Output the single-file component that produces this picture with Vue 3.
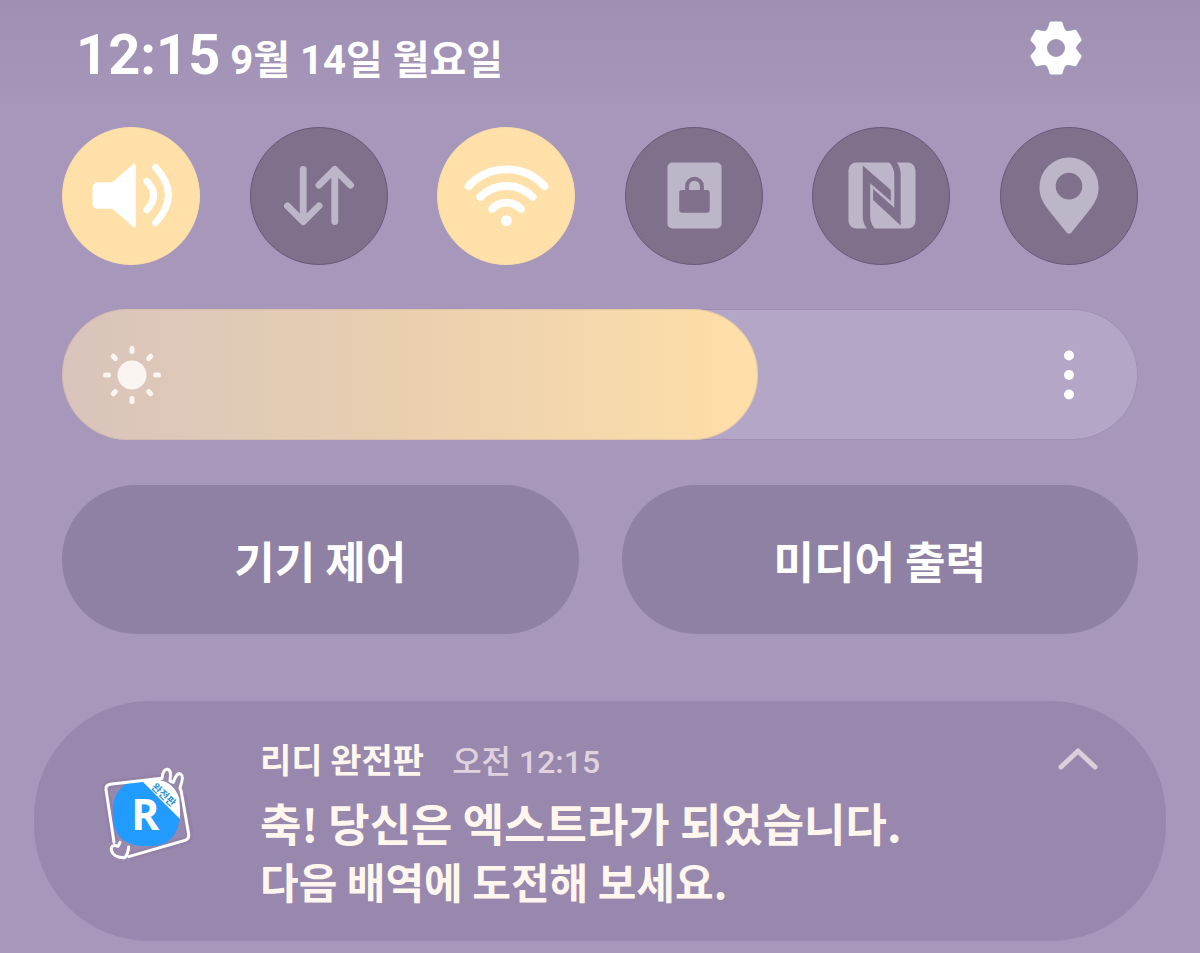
<script setup>
import { ref, computed } from "vue";

const toggles = ref([
  { id: "sound", label: "소리", on: true },
  { id: "data", label: "모바일 데이터", on: false },
  { id: "wifi", label: "Wi-Fi", on: true },
  { id: "lock", label: "화면 잠금", on: false },
  { id: "nfc", label: "NFC", on: false },
  { id: "location", label: "위치", on: false },
]);

const maxBrightness = 255;
const brightness = ref(165);
const fillWidth = computed(() => `${brightness.value / maxBrightness * 100}%`);

const expanded = ref(true);
</script>

<template>
  <main class="shade">
    <header>
      <h1>
        <time class="clock">12:15</time>
        <span class="date">9월 14일 월요일</span>
      </h1>
      <button class="settings" aria-label="설정">
        <svg viewBox="-28 -28 56 56">
          <circle class="ring" r="14.5" />
          <path v-for="n in 6" :key="n" class="tooth"
          d="M-9 -16 Q-7 -18 -5 -25 H5 Q7 -18 9 -16 Z"
          :transform="`rotate(${n * 60})`" />
        </svg>
      </button>
    </header>

    <section class="toggles">
      <button v-for="t in toggles" :key="t.id" class="toggle" :class="{ on: t.on }"
      :aria-label="t.label" :aria-pressed="t.on" @click="t.on = !t.on">
        <svg viewBox="0 0 138 138">
          <g v-if="t.id === 'sound'">
            <path class="solid" d="M36 55 H50 L71 37 Q74 35 74 39 V98 Q74 102 71 100 L50 82 H36 Q30 82 30 76 V61 Q30 55 36 55 Z" />
            <path class="line" d="M85 54 Q99 68 85 83" />
            <path class="line" d="M94 40 Q120 68 94 96" />
          </g>
          <g v-else-if="t.id === 'data'">
            <path class="line" d="M53 42 V95 M37 79 L53 95 L69 79" />
            <path class="line" d="M85 95 V42 M69 58 L85 42 L101 58" />
          </g>
          <g v-else-if="t.id === 'wifi'">
            <path class="line thick" d="M31 59 A52 52 0 0 1 108 59" />
            <path class="line thick" d="M43 70 A37 37 0 0 1 96 70" />
            <path class="line thick" d="M55 82 A20 20 0 0 1 84 82" />
            <circle class="solid" cx="69.5" cy="94" r="5.5" />
          </g>
          <g v-else-if="t.id === 'lock'">
            <rect class="solid" x="42" y="35" width="55" height="67" rx="5" />
            <rect class="cut" x="54" y="63" width="31" height="23" rx="3" />
            <path class="cut-line" d="M62 64 V59 A7.5 7.5 0 0 1 77 59 V64" />
          </g>
          <g v-else-if="t.id === 'nfc'">
            <rect class="solid" x="36" y="35" width="68" height="67" rx="8" />
            <path class="cut" d="M50.5 38 L79 63 V74 L58 56 V89 Q58 97 63 102.5 H55 Q50.5 97 50.5 89 Z" />
            <path class="cut" d="M89 99 L61 73 V62 L82.5 81 V48 Q82.5 40 77 34.5 H85 Q89 40 89 48 Z" />
          </g>
          <g v-else>
            <path class="solid" fill-rule="evenodd" d="M69 30 A30 30 0 0 1 99 60 C99 70 95 76 90 83 L71.5 106 Q69 108.5 66.5 106 L48 83 C43 76 39 70 39 60 A30 30 0 0 1 69 30 Z M69 45.5 A13.5 13.5 0 1 0 69 72.5 A13.5 13.5 0 1 0 69 45.5 Z" />
          </g>
        </svg>
      </button>
    </section>

    <section class="brightness">
      <div class="fill" :style="{ width: fillWidth }"></div>
      <svg class="sun" viewBox="-30 -30 60 60">
        <circle r="14.5" />
        <path v-for="n in 8" :key="n" d="M0 -23.5 V-26.5" :transform="`rotate(${n * 45})`" />
      </svg>
      <input v-model.number="brightness" type="range" min="0" :max="maxBrightness" aria-label="밝기">
      <button class="more" aria-label="더보기">
        <svg viewBox="0 0 10 50">
          <circle cx="5" cy="5.5" r="5" />
          <circle cx="5" cy="25" r="5" />
          <circle cx="5" cy="44.5" r="5" />
        </svg>
      </button>
    </section>

    <section class="shortcuts">
      <button>기기 제어</button>
      <button>미디어 출력</button>
    </section>

    <article class="notification">
      <svg class="app-icon" viewBox="0 0 360 360" role="img" aria-label="리디 완전판">
        <clipPath id="badge">
          <path d="M168 72 C234 72 268 102 270 170 C270 241 236 274 172 274 C102 274 68 244 68 172 C68 106 106 72 168 72 Z" />
        </clipPath>
        <path class="outline-shadow" d="M48 104 Q46 91 60 88 L215 70 M278 118 L298 238 Q300 252 287 256 L116 305 M48 104 L72 262" />
        <g clip-path="url(#badge)">
          <rect class="blue" x="60" y="60" width="220" height="220" />
          <path class="white" d="M148 70 L272 194 V60 H148 Z" />
        </g>
        <path class="white" d="M200 74 Q250 78 268 130 L270 190 L180 100 Z" />
        <path class="outline" d="M72 262 L48 104 Q46 91 60 88 L216 70 C218 54 222 42 232 43 C244 44 242 62 240 78 L250 82 C256 64 264 52 272 57 C282 62 276 82 270 98 Q274 108 276 122 L296 238 Q298 252 285 256 L116 305" />
        <path class="outline" d="M90 262 L84 274 Q62 266 64 286 Q70 308 104 308 Q114 298 116 276" />
        <text class="letter" x="124" y="224">R</text>
        <text class="ribbon" x="222" y="131" transform="rotate(43 222 119)">완전판</text>
      </svg>
      <div class="body">
        <p class="meta">
          <span class="app">리디 완전판</span>
          <time>오전 12:15</time>
        </p>
        <h2>축! 당신은 엑스트라가 되었습니다.</h2>
        <p v-if="expanded" class="text">다음 배역에 도전해 보세요.</p>
      </div>
      <button class="collapse" aria-label="접기" :aria-expanded="expanded" @click="expanded = !expanded">
        <svg viewBox="0 0 40 24">
          <path d="M3 20 L20 4 L37 20" />
        </svg>
      </button>
    </article>
  </main>
</template>

<style>
body {
  background-color: #a697bb;
}
</style>

<style scoped>
.shade {
  min-height: 100vh;
  box-sizing: border-box;
  padding: 14px 62px 12px;

  background: linear-gradient(#9e8fb3, #a697bb 120px);

  font-family: "Noto Sans CJK KR", sans-serif;
  font-weight: 700;
  color: #fff;
}

h1, h2, p {
  margin: 0;
  font-weight: 700;
}

button {
  padding: 0;
  border: none;
  background: none;
  font: inherit;
  color: inherit;
  cursor: pointer;
}

svg {
  display: block;
}

header {
  display: flex;
  justify-content: space-between;
  align-items: flex-start;
  height: 113px;
  padding: 0 54px 0 14px;
}

h1 {
  display: flex;
  align-items: baseline;
  gap: 10px;
  line-height: 82px;
}

h1, .meta time {
  font-family: Roboto, "Noto Sans CJK KR", sans-serif;
}

.clock {
  font-size: 56px;
}

.date {
  font-size: 40px;
}

.settings {
  margin-top: 6px;
}

.settings svg {
  width: 56px;
}

.ring {
  fill: none;
  stroke: #fff;
  stroke-width: 11;
}

.tooth {
  fill: #fff;
  stroke: #fff;
  stroke-width: 3;
  stroke-linejoin: round;
}

.toggles {
  display: flex;
  justify-content: space-between;
}

.toggle {
  --disc: #7f718b;
  --glyph: #bdb5c8;

  width: 138px;
  height: 138px;
  box-sizing: border-box;
  border: 1px solid #68587a;
  border-radius: 50%;
  background-color: var(--disc);
}

.toggle.on {
  --disc: #ffe0a8;
  --glyph: #fff;

  border-color: #fbdcac;
}

.toggle svg {
  width: 100%;
}

.solid {
  fill: var(--glyph);
}

.cut {
  fill: var(--disc);
}

.cut-line {
  fill: none;
  stroke: var(--disc);
  stroke-width: 4;
}

.line {
  fill: none;
  stroke: var(--glyph);
  stroke-width: 7;
  stroke-linecap: round;
  stroke-linejoin: round;
}

.line.thick {
  stroke-width: 8;
}

.brightness {
  position: relative;
  display: flex;
  justify-content: space-between;
  align-items: center;
  height: 131px;
  box-sizing: border-box;
  margin-top: 44px;
  padding: 0 64px 0 40px;

  border-radius: 66px;
  background-color: #b4a6c7;
  box-shadow: inset 0 0 0 1px #a08fb2;
}

.fill {
  position: absolute;
  inset: 0 auto 0 0;
  border-radius: 66px;
  background: linear-gradient(90deg, #d9c4bd, #e7ceb0 45%, #ffdfa8);
  box-shadow: inset 0 0 0 1px #c9ae9f66;
}

.brightness input {
  position: absolute;
  inset: 0;
  width: 100%;
  height: 100%;
  margin: 0;
  opacity: 0;
}

.sun {
  position: relative;
  width: 60px;
  fill: #fbf5f2;
  stroke: #fbf5f2;
  stroke-linecap: round;
}

.sun path {
  stroke-width: 5;
}

.sun circle {
  stroke: none;
}

.more {
  position: relative;
}

.more svg {
  width: 10px;
  fill: #fff;
}

.shortcuts {
  display: grid;
  grid-template-columns: 1fr 1fr;
  gap: 43px;
  margin-top: 45px;
}

.shortcuts button {
  height: 149px;
  border-radius: 75px;
  background-color: #8f81a3;
  font-size: 44px;
}

.notification {
  display: flex;
  align-items: flex-start;
  min-height: 240px;
  box-sizing: border-box;
  margin: 67px -28px 0;
  padding: 32px 68px 30px 56px;

  border-radius: 116px;
  background-color: #9888ad;
  color: #fff7ee;
}

.app-icon {
  flex: none;
  width: 120px;
  margin-top: 22px;
}

.blue {
  fill: #229bff;
}

.white {
  fill: #fff;
}

.outline {
  fill: none;
  stroke: #fff;
  stroke-width: 9;
  stroke-linejoin: round;
  stroke-linecap: round;
}

.outline-shadow {
  fill: none;
  stroke: #8c6f9e;
  stroke-opacity: .3;
  stroke-width: 24;
  stroke-linejoin: round;
}

.letter {
  fill: #fff;
  font-family: "Open Sans", sans-serif;
  font-size: 128px;
  font-weight: 700;
}

.ribbon {
  fill: #2d93d8;
  font-size: 31px;
  text-anchor: middle;
}

.body {
  flex: 1;
  margin-left: 50px;
}

.meta {
  display: flex;
  align-items: baseline;
  gap: 28px;
  font-size: 34px;
  line-height: 52px;
}

.meta time {
  font-size: 32px;
  font-weight: 500;
  color: #e0d3de;
}

h2 {
  font-size: 45px;
  line-height: 70px;
}

.text {
  font-size: 42px;
  line-height: 46px;
}

.collapse {
  margin-top: 14px;
}

.collapse svg {
  width: 40px;
  fill: none;
  stroke: #dccfdb;
  stroke-width: 5;
  stroke-linecap: round;
  stroke-linejoin: round;
}
</style>
